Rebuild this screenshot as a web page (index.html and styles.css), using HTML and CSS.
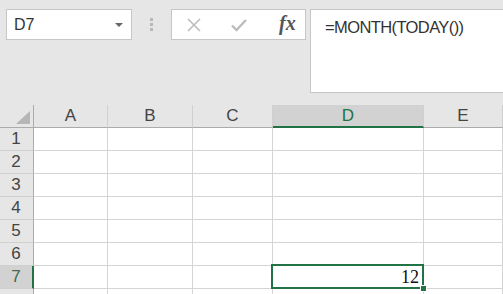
FILE: index.html
```html
<!DOCTYPE html>
<html lang="en">
<head>
    <meta charset="UTF-8">
    <title>Sheet</title>
    <link rel="stylesheet" href="styles.css">
</head>
<body>
    <div class="toolbar">
        <div class="name-box">
            <span class="name-text">D7</span>
            <span class="drop-arrow"></span>
        </div>
        <div class="grip">
            <span></span><span></span><span></span>
        </div>
        <div class="buttons">
            <svg class="icon" width="14" height="14" viewBox="0 0 14 14">
                <path d="M1 1 L13 13 M13 1 L1 13" stroke="#bcbcbc" stroke-width="1.6" fill="none"/>
            </svg>
            <svg class="icon" width="16" height="14" viewBox="0 0 16 14">
                <path d="M1 7.5 L5.5 12 L15 2" stroke="#bcbcbc" stroke-width="2.4" fill="none"/>
            </svg>
            <span class="fx">fx</span>
        </div>
        <div class="formula">=MONTH(TODAY())</div>
    </div>

    <div class="sheet">
        <div class="corner"><span class="corner-tri"></span></div>
        <div class="col-head">A</div>
        <div class="col-head">B</div>
        <div class="col-head">C</div>
        <div class="col-head active">D</div>
        <div class="col-head">E</div>

        <div class="row-head">1</div><div class="cell"></div><div class="cell"></div><div class="cell"></div><div class="cell"></div><div class="cell"></div>
        <div class="row-head">2</div><div class="cell"></div><div class="cell"></div><div class="cell"></div><div class="cell"></div><div class="cell"></div>
        <div class="row-head">3</div><div class="cell"></div><div class="cell"></div><div class="cell"></div><div class="cell"></div><div class="cell"></div>
        <div class="row-head">4</div><div class="cell"></div><div class="cell"></div><div class="cell"></div><div class="cell"></div><div class="cell"></div>
        <div class="row-head">5</div><div class="cell"></div><div class="cell"></div><div class="cell"></div><div class="cell"></div><div class="cell"></div>
        <div class="row-head">6</div><div class="cell"></div><div class="cell"></div><div class="cell"></div><div class="cell"></div><div class="cell"></div>
        <div class="row-head active">7</div><div class="cell"></div><div class="cell"></div><div class="cell"></div><div class="cell selected">12</div><div class="cell"></div>
        <div class="row-head"></div><div class="cell"></div><div class="cell"></div><div class="cell"></div><div class="cell"></div><div class="cell"></div>
    </div>
</body>
</html>
```

FILE: styles.css
```css
/* Spreadsheet window, formula bar on top */
html, body {
    margin: 0;
    height: 100%;
    overflow: hidden;
    background-color: #e6e6e6;
    font-family: "Liberation Sans", Arial, sans-serif;
}

.toolbar {
    height: 105px;
    display: flex;
    align-items: flex-start;
    padding-top: 9px;
    box-sizing: border-box;
}

.name-box {
    margin-left: 6px;
    width: 126px;
    height: 31px;
    box-sizing: border-box;
    background-color: #fff;
    border: 1px solid #c6c6c6;
    display: flex;
    align-items: center;
    padding: 0 8px 0 7px;
}

.name-text {
    flex: 1;
    font-size: 16px;
    color: #333;
}

.drop-arrow {
    width: 0;
    height: 0;
    border-left: 4px solid transparent;
    border-right: 4px solid transparent;
    border-top: 4px solid #666;
    margin-top: 1px;
}

.grip {
    width: 39px;
    height: 31px;
    display: flex;
    flex-direction: column;
    align-items: center;
    justify-content: center;
    gap: 2px;
}

.grip span {
    width: 3px;
    height: 3px;
    background-color: #b8b8b8;
}

.buttons {
    width: 135px;
    height: 31px;
    box-sizing: border-box;
    background-color: #fff;
    border: 1px solid #c6c6c6;
    display: flex;
    align-items: center;
    padding-left: 15px;
    gap: 30px;
}

.fx {
    font-family: "Liberation Serif", "Times New Roman", serif;
    font-style: italic;
    font-weight: bold;
    font-size: 20px;
    color: #555;
    margin-left: 2px;
    margin-top: -3px;
}

.formula {
    margin-left: 4px;
    flex: 1;
    height: 84px;
    box-sizing: border-box;
    background-color: #fff;
    border: 1px solid #c6c6c6;
    border-right: none;
    padding: 8px 0 0 14px;
    font-size: 16.5px;
    letter-spacing: -0.6px;
    color: #333;
}

.sheet {
    display: grid;
    grid-template-columns: 34px 74px 85px 80px 151px 79px;
    grid-template-rows: 23px repeat(8, 23px);
    background-color: #fff;
}

.corner {
    background-color: #e6e6e6;
    border-right: 1px solid #ababab;
    border-bottom: 1px solid #ababab;
    position: relative;
}

.corner-tri {
    position: absolute;
    right: 3px;
    bottom: 3px;
    width: 0;
    height: 0;
    border-left: 14px solid transparent;
    border-bottom: 13px solid #b6b6b6;
}

.col-head {
    background-color: #e6e6e6;
    border-right: 1px solid #d0d0d0;
    border-bottom: 1px solid #ababab;
    display: flex;
    align-items: center;
    justify-content: center;
    font-size: 17px;
    color: #444;
}

.col-head.active {
    background-color: #d2d2d2;
    border-bottom: 2px solid #217346;
    color: #217346;
}

.row-head {
    background-color: #e6e6e6;
    border-right: 1px solid #ababab;
    border-bottom: 1px solid #d0d0d0;
    display: flex;
    align-items: center;
    justify-content: center;
    font-size: 17px;
    color: #444;
    padding-right: 1px;
}

.row-head.active {
    background-color: #d2d2d2;
    border-right: 2px solid #217346;
    color: #3d6b52;
    padding-right: 0;
}

.cell {
    border-right: 1px solid #d4d4d4;
    border-bottom: 1px solid #d4d4d4;
}

.cell.selected {
    position: relative;
    text-align: right;
    font-family: "Liberation Serif", "Times New Roman", serif;
    font-size: 18px;
    line-height: 23px;
    padding-right: 4px;
    color: #111;
}

/* selection frame and fill handle sit over the grid lines */
.cell.selected::after {
    content: "";
    position: absolute;
    top: -2px;
    left: -2px;
    right: -1px;
    bottom: -1px;
    border: 2px solid #217346;
}

.cell.selected::before {
    content: "";
    position: absolute;
    right: -4px;
    bottom: -4px;
    width: 5px;
    height: 5px;
    background-color: #217346;
    border: 1px solid #fff;
    z-index: 1;
}
```
